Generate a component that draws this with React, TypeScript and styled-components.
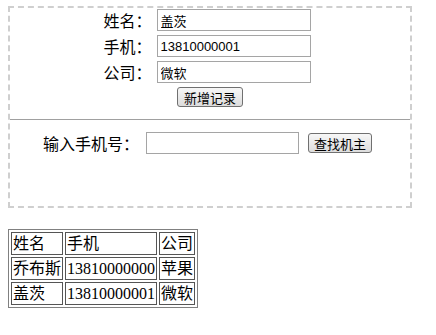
import React from "react";
import styled, { createGlobalStyle } from "styled-components";

const Global = createGlobalStyle`
  html, body { margin: 0; padding: 0; background: #fff; }
  body {
    font-family: "Liberation Serif", "Noto Sans CJK SC", serif;
    color: #000;
  }
`;

const Page = styled.div`
  padding: 6px 25px 0 8px;
`;

const Panel = styled.div`
  border: 2px dashed #cfcfcf;
  height: 202px;
  box-sizing: border-box;
  width: 404px;
  padding: 1px 0 0;
`;

const Form = styled.div`
  display: grid;
  grid-template-columns: auto auto;
  justify-content: center;
  column-gap: 5px;
  row-gap: 4px;
  padding-right: 6px;
`;

const Label = styled.label`
  font-family: "Noto Sans CJK SC", sans-serif;
  font-size: 16px;
  line-height: 22px;
  text-align: right;
`;

const Field = styled.input<{ $w: number }>`
  width: ${(p) => p.$w}px;
  height: 22px;
  box-sizing: border-box;
  border: 1px solid #a5a5a5;
  padding: 1px 3px 0;
  font-family: "Liberation Sans", "Noto Sans CJK SC", sans-serif;
  font-size: 13px;
  color: #000;
  outline: none;
  margin: 0;
`;

const Button = styled.button`
  font-family: "Noto Sans CJK SC", sans-serif;
  font-size: 13px;
  line-height: 15px;
  height: 20px;
  padding: 0 6px;
  border: 1px solid #707070;
  border-radius: 3px;
  background: linear-gradient(#f7f7f7, #dcdcdc);
  color: #000;
  margin: 0;
`;

const Centered = styled.div`
  display: flex;
  justify-content: center;
  padding: 4px 0 0;
`;

const Rule = styled.hr`
  border: none;
  border-top: 1px solid #a0a0a0;
  margin: 12px 0 0;
`;

const SearchRow = styled.div`
  display: flex;
  align-items: center;
  padding: 12px 0 0 33px;
`;

const SearchLabel = styled(Label)`
  margin-right: 7px;
`;

const SearchButton = styled(Button)`
  padding: 0 5px;
`;

const Gap = styled.span`
  width: 9px;
`;

const Table = styled.table`
  margin-top: 21px;
  border: 1px solid #808080;
  border-spacing: 2px;
  font-family: "Liberation Serif", "Noto Sans CJK SC", serif;
  font-size: 16px;
`;

const Cell = styled.td<{ $wide?: boolean }>`
  border: 1px solid #555;
  padding: 0 1px;
  height: 21px;
  line-height: 20px;
  white-space: nowrap;
  width: ${(p) => (p.$wide ? "88px" : "auto")};
`;

const rows = [
  ["姓名", "手机", "公司"],
  ["乔布斯", "13810000000", "苹果"],
  ["盖茨", "13810000001", "微软"],
];

export default function App() {
  return (
    <Page>
      <Global />
      <Panel>
        <Form>
          <Label>姓名：</Label>
          <Field $w={154} defaultValue="盖茨" />
          <Label>手机：</Label>
          <Field $w={154} defaultValue="13810000001" />
          <Label>公司：</Label>
          <Field $w={154} defaultValue="微软" />
        </Form>
        <Centered>
          <Button>新增记录</Button>
        </Centered>
        <Rule />
        <SearchRow>
          <SearchLabel>输入手机号：</SearchLabel>
          <Field $w={153} />
          <Gap />
          <SearchButton>查找机主</SearchButton>
        </SearchRow>
      </Panel>
      <Table>
        <tbody>
          {rows.map((r, i) => (
            <tr key={i}>
              {r.map((c, j) => (
                <Cell key={j} $wide={j === 1}>{c}</Cell>
              ))}
            </tr>
          ))}
        </tbody>
      </Table>
    </Page>
  );
}
